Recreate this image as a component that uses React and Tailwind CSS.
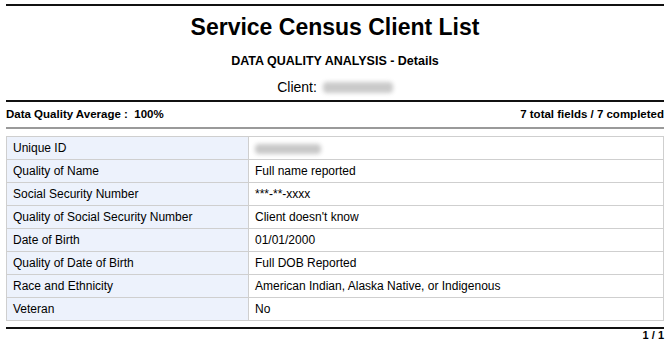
import React from "react";

const rows = [
  ["Unique ID", null],
  ["Quality of Name", "Full name reported"],
  ["Social Security Number", "***-**-xxxx"],
  ["Quality of Social Security Number", "Client doesn't know"],
  ["Date of Birth", "01/01/2000"],
  ["Quality of Date of Birth", "Full DOB Reported"],
  ["Race and Ethnicity", "American Indian, Alaska Native, or Indigenous"],
  ["Veteran", "No"],
];

export default function App() {
  return (
    <div
      className="w-[670px] h-[343px] bg-white px-[6px] text-black overflow-hidden"
      style={{ fontFamily: '"Liberation Sans", Arial, Helvetica, sans-serif' }}
    >
      <div className="h-[4px]" />
      <div className="h-[2px] bg-[#111]" />
      <div className="h-[42px] flex items-center justify-center text-[23px] font-bold leading-none">
        Service Census Client List
      </div>
      <div className="h-[26px] flex items-center justify-center text-[12.5px] font-bold leading-none">
        DATA QUALITY ANALYSIS - Details
      </div>
      <div className="h-[26px] flex items-center justify-center text-[14px] leading-none">
        Client:
        <span className="ml-[6px] inline-block w-[70px] h-[11px] bg-[#cacaca] blur-[2px] rounded" />
      </div>
      <div className="h-[2px] bg-[#111]" />
      <div className="h-[25px] flex items-center justify-between text-[11.5px] font-bold leading-none">
        <span>Data Quality Average :&nbsp; 100%</span>
        <span>7 total fields / 7 completed</span>
      </div>
      <div className="h-[2px] bg-[#9a9a9a]" />
      <div className="h-[7px]" />
      <table className="w-full border-collapse text-[12px] leading-none">
        <tbody>
          {rows.map(([k, v]) => (
            <tr key={k} className="h-[23px]">
              <td className="w-[242px] border border-[#cfcfcf] bg-[#edf2fc] px-[6px] py-0">{k}</td>
              <td className="border border-[#cfcfcf] px-[6px] py-0">
                {v === null ? (
                  <span className="inline-block align-middle w-[66px] h-[10px] bg-[#c8c8c8] blur-[2px] rounded" />
                ) : (
                  v
                )}
              </td>
            </tr>
          ))}
        </tbody>
      </table>
      <div className="h-[6px]" />
      <div className="h-[2px] bg-[#111]" />
      <div className="h-[13px] flex items-center justify-end text-[11px] font-bold leading-none">
        1 / 1
      </div>
    </div>
  );
}
